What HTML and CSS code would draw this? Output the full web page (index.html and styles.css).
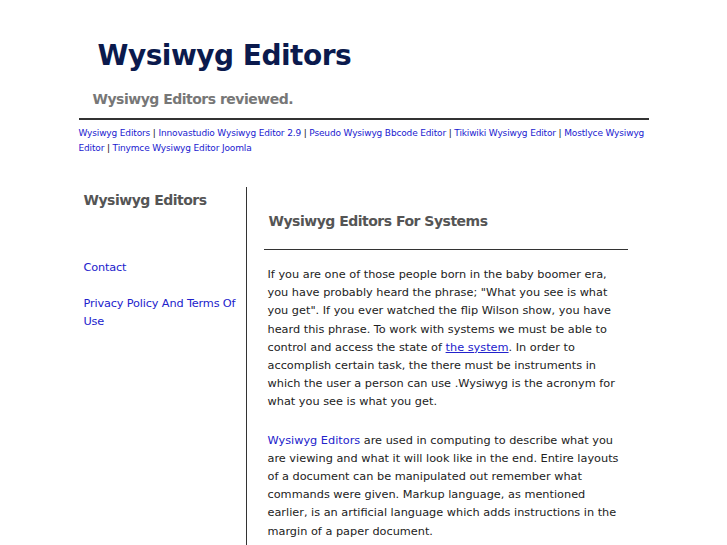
FILE: index.html
```html
<!DOCTYPE html>
<html>
<head>
<meta charset="utf-8">
<link rel="stylesheet" href="styles.css">
</head>
<body>
<div class="page">
  <div class="header">
    <h1 class="title">Wysiwyg Editors</h1>
    <div class="tagline">Wysiwyg Editors reviewed.</div>
  </div>
  <div class="nav">
    <a href="#">Wysiwyg Editors</a> | <a href="#">Innovastudio Wysiwyg Editor 2.9</a> | <a href="#">Pseudo Wysiwyg Bbcode Editor</a> | <a href="#">Tikiwiki Wysiwyg Editor</a> | <a href="#">Mostlyce Wysiwyg Editor</a> | <a href="#">Tinymce Wysiwyg Editor Joomla</a>
  </div>
  <div class="columns">
    <div class="sidebar">
      <div class="side-title">Wysiwyg Editors</div>
      <ul class="side-links">
        <li><a href="#">Contact</a></li>
        <li><a href="#">Privacy Policy And Terms Of Use</a></li>
      </ul>
    </div>
    <div class="main">
      <h2 class="main-title">Wysiwyg Editors For Systems</h2>
      <p>If you are one of those people born in the baby boomer era, you have probably heard the phrase; "What you see is what you get". If you ever watched the flip Wilson show, you have heard this phrase. To work with systems we must be able to control and access the state of <a class="ul" href="#">the system</a>. In order to accomplish certain task, the there must be instruments in which the user a person can use .Wysiwyg is the acronym for what you see is what you get.</p>
      <p><a href="#">Wysiwyg Editors</a> are used in computing to describe what you are viewing and what it will look like in the end. Entire layouts of a document can be manipulated out remember what commands were given. Markup language, as mentioned earlier, is an artificial language which adds instructions in the margin of a paper document.</p>
    </div>
  </div>
</div>
</body>
</html>
```

FILE: styles.css
```css
html, body {
  margin: 0;
  padding: 0;
  background: #fff;
}
body {
  font-family: "DejaVu Sans", Verdana, sans-serif;
  color: #222;
}
.page {
  width: 570px;
  margin: 0 auto;
}
.header {
  padding: 39px 0 10px 0;
  border-bottom: 2px solid #333;
}
.title {
  margin: 0 0 0 19px;
  font-size: 28px;
  line-height: 34px;
  font-weight: bold;
  letter-spacing: -0.5px;
  color: #0b1a4d;
}
.tagline {
  margin: 17px 0 0 14px;
  font-size: 14px;
  line-height: 18px;
  font-weight: bold;
  letter-spacing: -0.5px;
  color: #777;
}
.nav {
  padding-top: 6px;
  font-size: 9px;
  line-height: 15px;
  letter-spacing: -0.15px;
  color: #111;
}
.nav a {
  color: #1a1ad0;
  text-decoration: none;
}
.columns {
  display: flex;
  margin-top: 31px;
}
.sidebar {
  width: 168px;
  flex: none;
  border-right: 1px solid #333;
  padding: 4px 0 300px 5px;
  box-sizing: border-box;
}
.side-title {
  font-size: 14px;
  font-weight: bold;
  letter-spacing: -0.5px;
  color: #555;
  line-height: 18px;
}
.side-links {
  list-style: none;
  margin: 50px 0 0 0;
  padding: 0;
  font-size: 11.3px;
  line-height: 18px;
  letter-spacing: -0.15px;
}
.side-links li {
  margin-bottom: 18px;
}
.side-links a {
  color: #2222cc;
  text-decoration: none;
}
.main {
  width: 364px;
  margin-left: 17px;
}
.main-title {
  margin: 25px 0 0 0;
  padding: 0 0 19px 5px;
  border-bottom: 1px solid #333;
  font-size: 14px;
  line-height: 18px;
  font-weight: bold;
  letter-spacing: -0.5px;
  color: #555;
}
.main p {
  margin: 16px 0 20px 0;
  padding: 0 0 0 4px;
  font-size: 11.3px;
  line-height: 18.2px;
}
.main a {
  color: #2222cc;
  text-decoration: none;
}
.main a.ul {
  text-decoration: underline;
}
```
